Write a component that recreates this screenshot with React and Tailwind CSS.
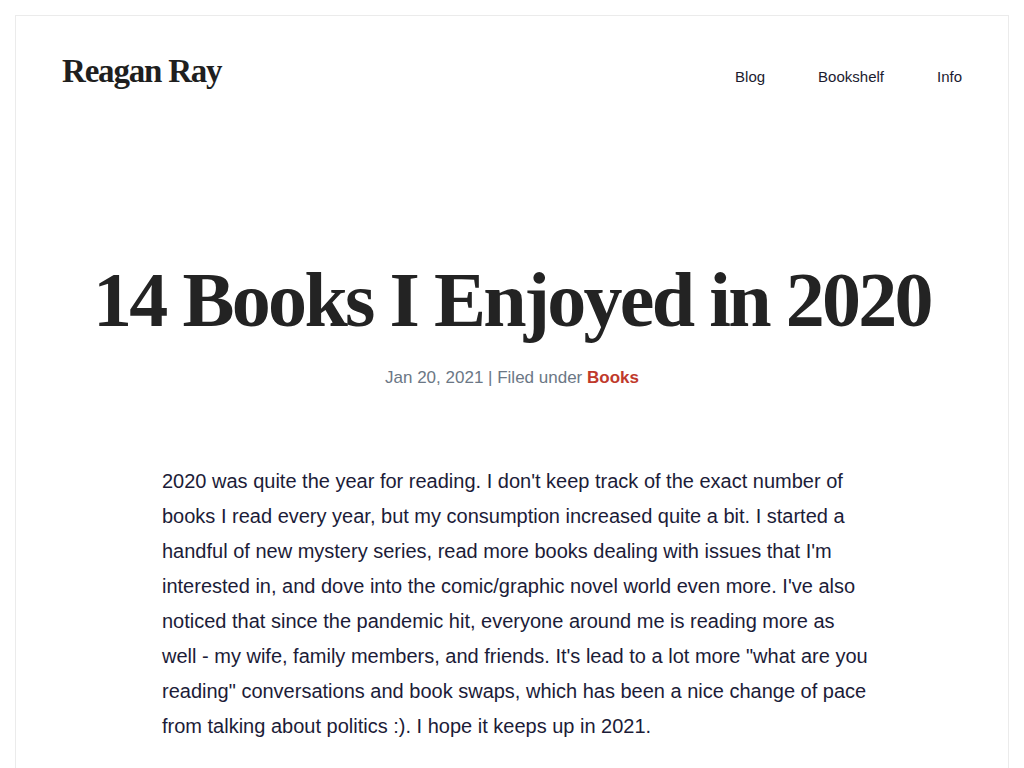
export default function App() {
  const sans = { fontFamily: '"Liberation Sans", Arial, sans-serif' };
  return (
    <div className="min-h-screen bg-white p-[15px]">
      <div className="min-h-[800px] border border-[#ebebeb] bg-white">
        <header className="flex items-center justify-between px-[46px] pt-[38px]">
          <a
            href="#"
            className="text-[33px] font-bold leading-none tracking-[-1.2px] text-[#1f1f1f]"
            style={{ fontFamily: '"Liberation Serif", "Times New Roman", serif' }}
          >
            Reagan Ray
          </a>
          <nav className="mt-[12px] flex gap-[53px] text-[15px] text-[#1b1b2f]" style={sans}>
            <a href="#">Blog</a>
            <a href="#">Bookshelf</a>
            <a href="#">Info</a>
          </nav>
        </header>

        <main className="pt-[172px]">
          <h1
            className="text-center text-[78px] font-bold leading-none tracking-[-2.7px] text-[#232323]"
            style={{ fontFamily: '"Liberation Serif", "Times New Roman", serif' }}
          >
            14 Books I Enjoyed in 2020
          </h1>
          <p className="mt-[26px] text-center text-[17px] text-[#6b7785]" style={sans}>
            Jan 20, 2021 | Filed under{" "}
            <a href="#" className="font-bold text-[#c0392b]">
              Books
            </a>
          </p>

          <div className="ml-[146px] mt-[74px] w-[712px] text-[20px] leading-[35px] text-[#1c1c38]" style={sans}>
            <p>
              2020 was quite the year for reading. I don't keep track of the exact number of books I read every
              year, but my consumption increased quite a bit. I started a handful of new mystery series, read more
              books dealing with issues that I'm interested in, and dove into the comic/graphic novel world even
              more. I've also noticed that since the pandemic hit, everyone around me is reading more as well - my
              wife, family members, and friends. It's lead to a lot more "what are you reading" conversations and
              book swaps, which has been a nice change of pace from talking about politics :). I hope it keeps up in
              2021.
            </p>
          </div>
        </main>
      </div>
    </div>
  );
}
